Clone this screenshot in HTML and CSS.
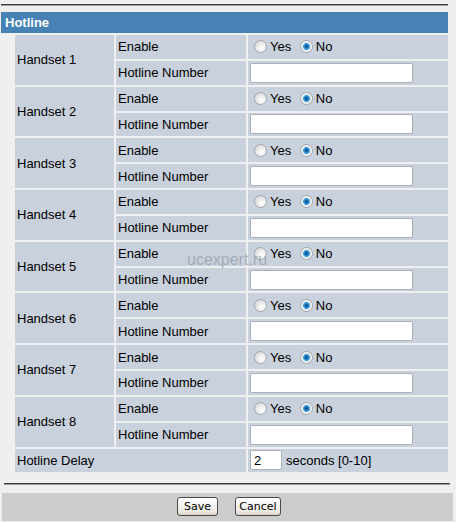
FILE: index.html
```html
<!DOCTYPE html>
<html lang="en">
<head>
    <meta charset="UTF-8">
    <title>Hotline</title>
    <link rel="stylesheet" href="styles.css">
</head>
<body>

<div class="frame">
    <div class="rule top-rule"></div>
    <div class="section-title">Hotline</div>

    <table class="settings">
        <tr>
            <td class="label" rowspan="2">Handset 1</td>
            <td class="field">Enable</td>
            <td class="value">
                <input type="radio" name="h1"><span class="opt">Yes</span>
                <input type="radio" name="h1" checked><span class="opt">No</span>
            </td>
        </tr>
        <tr>
            <td class="field">Hotline Number</td>
            <td class="value"><input type="text" class="number"></td>
        </tr>
        <tr>
            <td class="label" rowspan="2">Handset 2</td>
            <td class="field">Enable</td>
            <td class="value">
                <input type="radio" name="h2"><span class="opt">Yes</span>
                <input type="radio" name="h2" checked><span class="opt">No</span>
            </td>
        </tr>
        <tr>
            <td class="field">Hotline Number</td>
            <td class="value"><input type="text" class="number"></td>
        </tr>
        <tr>
            <td class="label" rowspan="2">Handset 3</td>
            <td class="field">Enable</td>
            <td class="value">
                <input type="radio" name="h3"><span class="opt">Yes</span>
                <input type="radio" name="h3" checked><span class="opt">No</span>
            </td>
        </tr>
        <tr>
            <td class="field">Hotline Number</td>
            <td class="value"><input type="text" class="number"></td>
        </tr>
        <tr>
            <td class="label" rowspan="2">Handset 4</td>
            <td class="field">Enable</td>
            <td class="value">
                <input type="radio" name="h4"><span class="opt">Yes</span>
                <input type="radio" name="h4" checked><span class="opt">No</span>
            </td>
        </tr>
        <tr>
            <td class="field">Hotline Number</td>
            <td class="value"><input type="text" class="number"></td>
        </tr>
        <tr>
            <td class="label" rowspan="2">Handset 5</td>
            <td class="field">Enable</td>
            <td class="value">
                <input type="radio" name="h5"><span class="opt">Yes</span>
                <input type="radio" name="h5" checked><span class="opt">No</span>
            </td>
        </tr>
        <tr>
            <td class="field">Hotline Number</td>
            <td class="value"><input type="text" class="number"></td>
        </tr>
        <tr>
            <td class="label" rowspan="2">Handset 6</td>
            <td class="field">Enable</td>
            <td class="value">
                <input type="radio" name="h6"><span class="opt">Yes</span>
                <input type="radio" name="h6" checked><span class="opt">No</span>
            </td>
        </tr>
        <tr>
            <td class="field">Hotline Number</td>
            <td class="value"><input type="text" class="number"></td>
        </tr>
        <tr>
            <td class="label" rowspan="2">Handset 7</td>
            <td class="field">Enable</td>
            <td class="value">
                <input type="radio" name="h7"><span class="opt">Yes</span>
                <input type="radio" name="h7" checked><span class="opt">No</span>
            </td>
        </tr>
        <tr>
            <td class="field">Hotline Number</td>
            <td class="value"><input type="text" class="number"></td>
        </tr>
        <tr>
            <td class="label" rowspan="2">Handset 8</td>
            <td class="field">Enable</td>
            <td class="value">
                <input type="radio" name="h8"><span class="opt">Yes</span>
                <input type="radio" name="h8" checked><span class="opt">No</span>
            </td>
        </tr>
        <tr>
            <td class="field">Hotline Number</td>
            <td class="value"><input type="text" class="number"></td>
        </tr>
        <tr>
            <td class="label" colspan="2">Hotline Delay</td>
            <td class="value"><input type="text" class="delay" value="2"><span class="unit">seconds [0-10]</span></td>
        </tr>
    </table>

    <div class="rule bottom-rule"></div>
</div>

<div class="button-bar">
    <button type="button">Save</button>
    <button type="button" class="cancel">Cancel</button>
</div>

<div class="watermark">ucexpert.ru</div>

</body>
</html>
```

FILE: styles.css
```css
* {
    box-sizing: border-box;
}
body {
    margin: 0;
    background-color: #efefef;
    font-family: 'Liberation Sans', Arial, sans-serif;
    font-size: 13px;
    color: #000;
    position: relative;
    height: 522px;
    overflow: hidden;
}
.frame {
    width: 448px;
    padding-top: 4px;
}
.rule {
    height: 2px;
    border-top: 1px solid #3c3c3c;
    border-bottom: 1px solid #9a9a9a;
}
.top-rule {
    margin-left: 1px;
}
.section-title {
    margin: 6px 0 0 1px;
    height: 21px;
    line-height: 21px;
    padding-left: 4px;
    background-color: #4682b4;
    color: #fff;
    font-weight: bold;
    font-size: 13px;
}
.settings {
    margin-left: 13px;
    width: 437px;
    border-collapse: separate;
    border-spacing: 2px;
}
.settings td {
    background-color: #c9d1dc;
    height: 23.85px;
    padding: 0 2px;
    vertical-align: middle;
    white-space: nowrap;
}
.settings td.label {
    width: 99px;
}
.settings td.field {
    width: 130px;
}
.settings td.value {
    padding-left: 2px;
}
input[type="radio"] {
    appearance: none;
    -webkit-appearance: none;
    width: 13px;
    height: 13px;
    margin: 0 3px 0 4px;
    border: 1px solid #a2a7ad;
    border-radius: 50%;
    background: radial-gradient(circle at 65% 70%, #ffffff 0%, #ececec 45%, #cfcfcf 100%);
    vertical-align: -2px;
}
input[type="radio"]:checked {
    background: radial-gradient(circle at 50% 50%, #0d3f70 0%, #1a74bd 22%, #49a8e6 40%, #e9e9e9 50%, #f6f6f6 70%, #d4d4d4 100%);
}
.opt {
    margin-right: 1px;
}
input[type="text"] {
    height: 20px;
    border: 1px solid #aab1ba;
    border-radius: 2px;
    background: #fff;
    font-family: 'Liberation Sans', Arial, sans-serif;
    font-size: 13px;
    padding: 0 3px;
    vertical-align: middle;
}
.number {
    width: 163px;
}
.delay {
    width: 32px;
}
.unit {
    margin-left: 4px;
    vertical-align: middle;
}
.bottom-rule {
    margin: 9px 0 0 4px;
    width: 446px;
}
.button-bar {
    margin: 8px 0 0 2px;
    width: 451px;
    height: 28px;
    padding-top: 4px;
    background-color: #cccccc;
    display: flex;
    justify-content: center;
    gap: 17px;
}
.button-bar button {
    height: 19px;
    width: 41px;
    padding: 0;
    border: 1px solid #4a4a4a;
    border-radius: 3px;
    background: linear-gradient(#ffffff, #ece9e2 80%, #d6d0c5);
    font-family: 'DejaVu Sans', Tahoma, sans-serif;
    font-size: 11px;
    color: #000;
    margin-left: 3px;
}
.button-bar button.cancel {
    width: 46px;
    margin-left: 0;
}
.watermark {
    position: absolute;
    left: 187px;
    top: 251px;
    font-size: 16px;
    color: rgba(150, 158, 170, 0.75);
    pointer-events: none;
}
```
